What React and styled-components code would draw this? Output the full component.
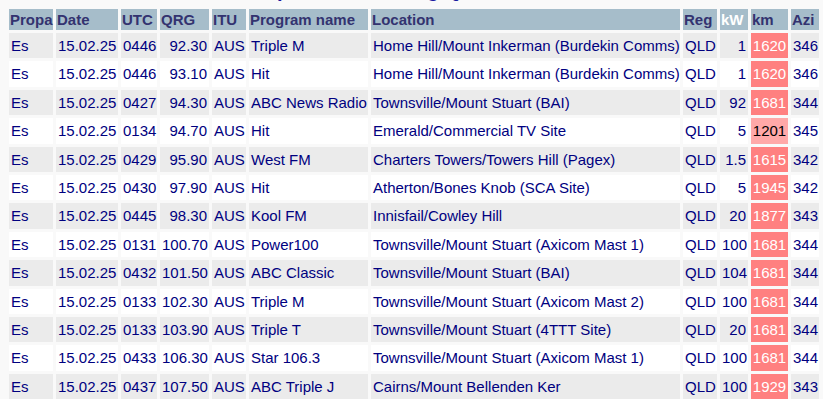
import React from 'react';
import styled, { createGlobalStyle } from 'styled-components';

const GlobalStyle = createGlobalStyle`
  html, body {
    margin: 0;
    padding: 0;
    overflow: hidden;
    background: #f9f9f9;
  }
  body {
    font-family: "Liberation Sans", Arial, sans-serif;
  }
`;

const Page = styled.div`
  padding: 0 6px;
`;

const Title = styled.h1`
  margin: -22px 0 4px;
  font-size: 20px;
  line-height: 24px;
  color: #1a1aa0;
  text-align: center;
`;

const Table = styled.table`
  border-collapse: separate;
  border-spacing: 3px;
  table-layout: fixed;
  width: 816px;
  font-size: 15px;
`;

const Head = styled.th`
  background: #a6bdca;
  color: ${(p) => (p.$light ? '#ffffff' : '#333370')};
  font-weight: bold;
  text-align: left;
  padding: 2px 1px 1px;
  line-height: 18px;
  white-space: nowrap;
`;

const Row = styled.tr`
  background: ${(p) => (p.$odd ? '#ebebeb' : '#ffffff')};
`;

const Cell = styled.td`
  color: #000080;
  padding: 4px 2px;
  line-height: 17.4px;
  white-space: nowrap;
  overflow: hidden;
  text-align: ${(p) => p.$align || 'left'};
`;

const Dist = styled.td`
  background: ${(p) => (p.$near ? '#ffa8a8' : '#ff8080')};
  color: ${(p) => (p.$near ? '#000000' : '#ffffff')};
  padding: 4px 1px;
  line-height: 17.4px;
  text-align: center;
  white-space: nowrap;
`;

const columns = [
  { label: 'Propa', width: 44 },
  { label: 'Date', width: 62 },
  { label: 'UTC', width: 36 },
  { label: 'QRG', width: 49 },
  { label: 'ITU', width: 34 },
  { label: 'Program name', width: 119 },
  { label: 'Location', width: 309 },
  { label: 'Reg', width: 34 },
  { label: 'kW', width: 28, light: true },
  { label: 'km', width: 37 },
  { label: 'Azi', width: 28 },
];

const logs = [
  ['0446', '92.30', 'Triple M', 'Home Hill/Mount Inkerman (Burdekin Comms)', '1', '1620', '346'],
  ['0446', '93.10', 'Hit', 'Home Hill/Mount Inkerman (Burdekin Comms)', '1', '1620', '346'],
  ['0427', '94.30', 'ABC News Radio', 'Townsville/Mount Stuart (BAI)', '92', '1681', '344'],
  ['0134', '94.70', 'Hit', 'Emerald/Commercial TV Site', '5', '1201', '345'],
  ['0429', '95.90', 'West FM', 'Charters Towers/Towers Hill (Pagex)', '1.5', '1615', '342'],
  ['0430', '97.90', 'Hit', 'Atherton/Bones Knob (SCA Site)', '5', '1945', '342'],
  ['0445', '98.30', 'Kool FM', 'Innisfail/Cowley Hill', '20', '1877', '343'],
  ['0131', '100.70', 'Power100', 'Townsville/Mount Stuart (Axicom Mast 1)', '100', '1681', '344'],
  ['0432', '101.50', 'ABC Classic', 'Townsville/Mount Stuart (BAI)', '104', '1681', '344'],
  ['0133', '102.30', 'Triple M', 'Townsville/Mount Stuart (Axicom Mast 2)', '100', '1681', '344'],
  ['0133', '103.90', 'Triple T', 'Townsville/Mount Stuart (4TTT Site)', '20', '1681', '344'],
  ['0433', '106.30', 'Star 106.3', 'Townsville/Mount Stuart (Axicom Mast 1)', '100', '1681', '344'],
  ['0437', '107.50', 'ABC Triple J', 'Cairns/Mount Bellenden Ker', '100', '1929', '343'],
];

const App = () => {
  return (
    <Page>
      <GlobalStyle />
      <Title>Sporadic-E FM log Queensland</Title>
      <Table>
        <colgroup>
          {columns.map((c) => (
            <col key={c.label} style={{ width: c.width }} />
          ))}
        </colgroup>
        <thead>
          <tr>
            {columns.map((c) => (
              <Head key={c.label} $light={c.light}>{c.label}</Head>
            ))}
          </tr>
        </thead>
        <tbody>
          {logs.map(([utc, qrg, name, loc, kw, km, azi], i) => (
            <Row key={i} $odd={i % 2 === 0}>
              <Cell>Es</Cell>
              <Cell>15.02.25</Cell>
              <Cell>{utc}</Cell>
              <Cell $align="right">{qrg}</Cell>
              <Cell>AUS</Cell>
              <Cell>{name}</Cell>
              <Cell>{loc}</Cell>
              <Cell>QLD</Cell>
              <Cell $align="right">{kw}</Cell>
              <Dist $near={Number(km) < 1500}>{km}</Dist>
              <Cell>{azi}</Cell>
            </Row>
          ))}
        </tbody>
      </Table>
    </Page>
  );
};

export default App;
